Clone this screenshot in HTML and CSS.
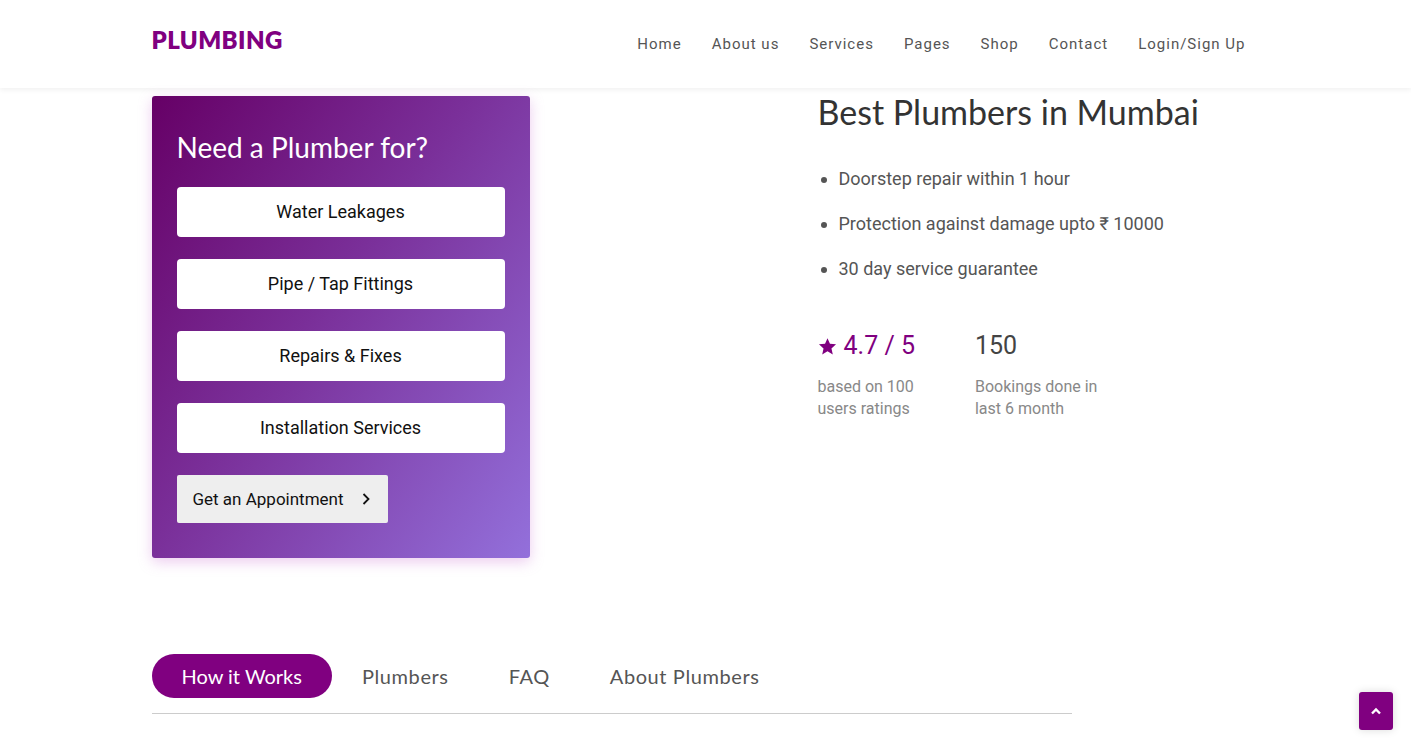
FILE: index.html
```html
<!DOCTYPE html>
<html lang="en">
<head>
<meta charset="utf-8">
<title>Plumbing</title>
<link rel="stylesheet" href="styles.css">
</head>
<body>
<header class="site-header">
  <div class="container header-inner">
    <a class="logo" href="#">PLUMBING</a>
    <nav class="main-nav">
      <a href="#">Home</a>
      <a href="#">About us</a>
      <a href="#">Services</a>
      <a href="#">Pages</a>
      <a href="#">Shop</a>
      <a href="#">Contact</a>
      <a href="#">Login/Sign Up</a>
    </nav>
  </div>
</header>

<main class="container">
  <section class="hero">
    <div class="card">
      <h2 class="card-title">Need a Plumber for?</h2>
      <div class="service-list">
        <a class="service-btn" href="#">Water Leakages</a>
        <a class="service-btn" href="#">Pipe / Tap Fittings</a>
        <a class="service-btn" href="#">Repairs &amp; Fixes</a>
        <a class="service-btn" href="#">Installation Services</a>
      </div>
      <a class="appt-btn" href="#">Get an Appointment
        <svg class="chev" width="10" height="14" viewBox="0 0 10 14"><path d="M2.5 2 L7.5 7 L2.5 12" fill="none" stroke="#111" stroke-width="1.8"/></svg>
      </a>
    </div>
    <div class="info">
      <h1 class="info-title">Best Plumbers in Mumbai</h1>
      <ul class="perks">
        <li>Doorstep repair within 1 hour</li>
        <li>Protection against damage upto ₹ 10000</li>
        <li>30 day service guarantee</li>
      </ul>
      <div class="stats">
        <div class="stat">
          <div class="stat-value rating">
            <svg class="star" width="19" height="19" viewBox="0 0 24 24"><path d="M12 1.5l3.1 7.1 7.7.7-5.8 5.1 1.7 7.6L12 18l-6.7 4 1.7-7.6L1.2 9.3l7.7-.7z" fill="#800080"/></svg>
            <span>4.7 / 5</span>
          </div>
          <p class="stat-label">based on 100<br>users ratings</p>
        </div>
        <div class="stat">
          <div class="stat-value">150</div>
          <p class="stat-label">Bookings done in<br>last 6 month</p>
        </div>
      </div>
    </div>
  </section>

  <section class="tabs">
    <a class="tab active" href="#">How it Works</a>
    <a class="tab" href="#">Plumbers</a>
    <a class="tab" href="#">FAQ</a>
    <a class="tab" href="#">About Plumbers</a>
  </section>
</main>

<a class="to-top" href="#">
  <svg width="12" height="8" viewBox="0 0 12 8"><path d="M2 6.5 L6 2.5 L10 6.5" fill="none" stroke="#fff" stroke-width="2.4"/></svg>
</a>
</body>
</html>
```

FILE: styles.css
```css
* { box-sizing: border-box; }
html, body { margin: 0; padding: 0; }
body {
  font-family: Roboto, "Liberation Sans", sans-serif;
  color: #555;
  background: #fff;
}
a { text-decoration: none; color: inherit; }

.container {
  width: 1110px;
  margin: 0 auto;
}

.site-header {
  height: 88px;
  background: #fff;
  box-shadow: 0 2px 5px rgba(0,0,0,0.06);
}
.header-inner {
  display: flex;
  align-items: center;
  justify-content: space-between;
  height: 100%;
  padding-left: 1px;
  padding-right: 15px;
}
.logo {
  font-family: Lato, "Open Sans", sans-serif;
  font-weight: 800;
  font-size: 24px;
  color: #800080;
  letter-spacing: 0.4px;
  margin-top: -10px;
}
.main-nav {
  display: flex;
  margin-top: -1px;
}
.main-nav a {
  font-size: 15px;
  letter-spacing: 1px;
  color: #555;
  margin-left: 30px;
}

.hero {
  display: grid;
  grid-template-columns: 666px 1fr;
  margin-top: 8px;
  padding-left: 1px;
}
.card {
  width: 378px;
  padding: 33px 25px 35px;
  border-radius: 3px;
  background: linear-gradient(125deg, #660066 0%, #7a2f99 45%, #9370db 100%);
  box-shadow: 0 4px 14px rgba(200, 110, 210, 0.35);
}
.card-title {
  margin: 0 0 22px;
  font-family: Lato, "Open Sans", sans-serif;
  font-weight: 400;
  font-size: 28px;
  line-height: 36px;
  color: #fff;
}
.service-list {
  display: flex;
  flex-direction: column;
  gap: 22px;
}
.service-btn {
  display: flex;
  align-items: center;
  justify-content: center;
  height: 50px;
  padding-bottom: 2px;
  background: #fff;
  border-radius: 4px;
  font-size: 18px;
  color: #111;
}
.appt-btn {
  display: inline-flex;
  align-items: center;
  gap: 17px;
  margin-top: 22px;
  height: 48px;
  padding: 0 17px 0 16px;
  background: #eee;
  border-radius: 2px;
  font-size: 17px;
  color: #111;
}

.info-title {
  margin: 0;
  font-family: Lato, "Open Sans", sans-serif;
  font-weight: 400;
  font-size: 34px;
  line-height: 40px;
  color: #333;
  margin-top: -4px;
}
.perks {
  margin: 34px 0 0;
  padding-left: 21px;
  font-size: 18px;
  color: #555;
}
.perks li {
  line-height: 25px;
  margin-bottom: 20px;
}
.stats {
  display: flex;
  gap: 60px;
  margin-top: 50px;
}
.stat-value {
  font-size: 25px;
  line-height: 30px;
  color: #444;
  display: flex;
  align-items: center;
  gap: 7px;
}
.stat-value.rating { color: #800080; }
.stat-label {
  margin: 15px 0 0;
  font-size: 16px;
  line-height: 22px;
  color: #888;
}

.tabs {
  display: flex;
  align-items: center;
  margin-top: 96px;
  margin-left: 1px;
  width: 920px;
  padding-bottom: 15px;
  border-bottom: 1px solid #ccc;
}
.tab {
  font-family: Lato, "Open Sans", sans-serif;
  font-size: 20px;
  letter-spacing: 0.6px;
  color: #555;
  height: 44px;
  line-height: 44px;
  padding: 0 30px;
}
.tab.active {
  background: #800080;
  color: #fff;
  border-radius: 22px;
  letter-spacing: 0;
}

.to-top {
  position: fixed;
  right: 18px;
  bottom: 21px;
  width: 34px;
  height: 38px;
  display: flex;
  align-items: center;
  justify-content: center;
  background: #800080;
  border-radius: 3px;
  box-shadow: 0 0 8px rgba(0,0,0,0.15);
}
```
